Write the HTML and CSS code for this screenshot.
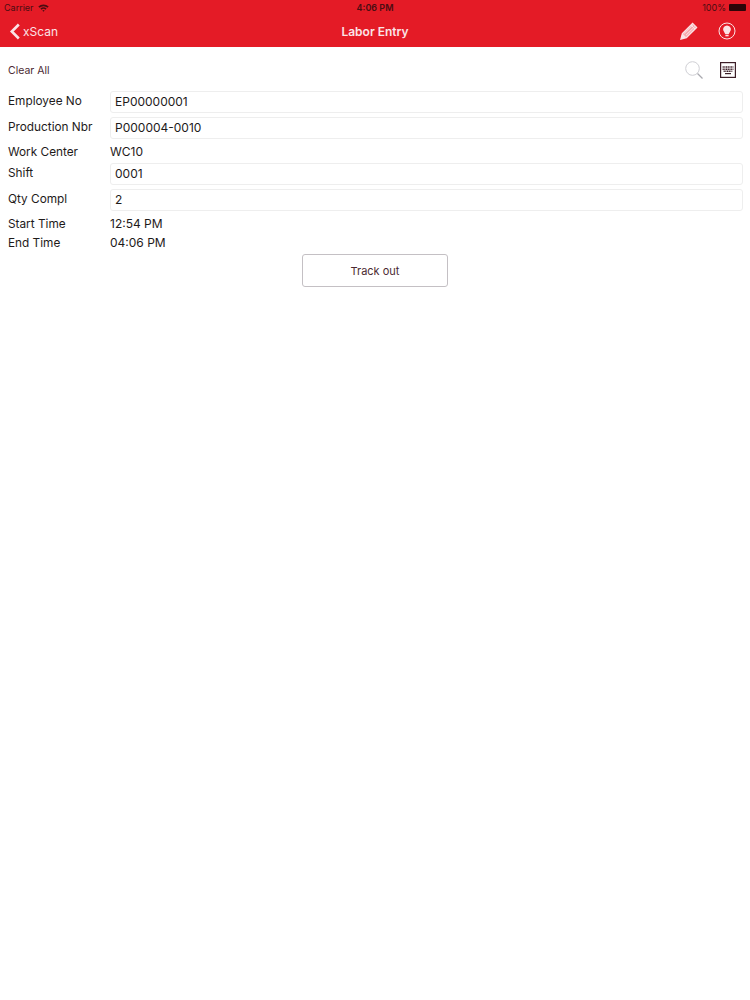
FILE: index.html
```html
<!DOCTYPE html>
<html lang="en">
<head>
  <meta charset="UTF-8">
  <meta name="viewport" content="width=device-width, initial-scale=1.0">
  <title>Labor Entry</title>
  <link rel="stylesheet" href="styles.css">
</head>
<body>

  <header class="app-header">
    <div class="status-bar">
      <div class="status-left">
        <span>Carrier</span>
        <svg class="wifi" width="11" height="8" viewBox="0 0 11 8">
          <path d="M0.3 2.6 A7.5 7.5 0 0 1 10.7 2.6 L9.5 3.8 A5.8 5.8 0 0 0 1.5 3.8 Z" fill="#4a0d12"/>
          <path d="M2.4 4.6 A4.6 4.6 0 0 1 8.6 4.6 L7.5 5.7 A3 3 0 0 0 3.5 5.7 Z" fill="#4a0d12"/>
          <path d="M4.3 6.5 A1.8 1.8 0 0 1 6.7 6.5 L5.5 7.8 Z" fill="#4a0d12"/>
        </svg>
      </div>
      <div class="status-time">4:06 PM</div>
      <div class="status-right">
        <span>100%</span>
        <span class="battery"><span class="battery-fill"></span></span>
      </div>
    </div>
    <div class="nav-bar">
      <div class="nav-back">
        <svg width="12" height="17" viewBox="0 0 12 17">
          <path d="M9.8 1.5 L2.8 8.5 L9.8 15.5" fill="none" stroke="#fbe4e6" stroke-width="2.6"/>
        </svg>
        <span>xScan</span>
      </div>
      <div class="nav-title">Labor Entry</div>
      <div class="nav-actions">
        <svg width="18" height="18" viewBox="0 0 18 18">
          <path d="M1 17 L2.4 11.6 L12.6 1.4 L16.6 5.4 L6.4 15.6 Z" fill="#f6a9ad" stroke="#fbe4e6" stroke-width="1.3"/>
          <path d="M1 17 L2.4 11.6 L6.4 15.6 Z" fill="#fbe4e6"/>
          <path d="M4.2 11.4 L13 2.8 M6 13.2 L14.8 4.6 M11 3 L15 7" fill="none" stroke="#fbe4e6" stroke-width="1"/>
        </svg>
        <svg width="18" height="18" viewBox="0 0 18 18">
          <circle cx="9" cy="9" r="8" fill="none" stroke="#fbe4e6" stroke-width="1"/>
          <path d="M9 3.4 A4 4 0 0 1 11.6 10.4 L10.8 12 L7.2 12 L6.4 10.4 A4 4 0 0 1 9 3.4 Z" fill="#fbe4e6"/>
          <rect x="7.4" y="12.7" width="3.2" height="1.6" fill="#fbe4e6"/>
        </svg>
      </div>
    </div>
  </header>

  <main class="content">
    <div class="toolbar">
      <span class="clear-all">Clear All</span>
      <div class="toolbar-icons">
        <svg width="18" height="18" viewBox="0 0 18 18">
          <circle cx="7.5" cy="7.5" r="6.8" fill="none" stroke="#cfcfd4" stroke-width="1"/>
          <path d="M12.5 12.5 L17.5 17.5" stroke="#a9a9ae" stroke-width="1.2"/>
        </svg>
        <svg width="16" height="16" viewBox="0 0 16 16">
          <rect x="0.6" y="0.6" width="14.8" height="14.8" fill="none" stroke="#3d1f28" stroke-width="1.2"/>
          <path d="M2.6 5 H13.4 M2.6 7.2 H13.4 M3.6 9.2 H12.4" stroke="#3d1f28" stroke-width="1.4" stroke-dasharray="1.2 0.5"/>
          <path d="M5 11.6 H11" stroke="#3d1f28" stroke-width="1.2"/>
        </svg>
      </div>
    </div>

    <form class="entry-form">
      <div class="row row-input">
        <label>Employee No</label>
        <div class="field">EP00000001</div>
      </div>
      <div class="row row-input">
        <label>Production Nbr</label>
        <div class="field">P000004-0010</div>
      </div>
      <div class="row row-text row-center">
        <label>Work Center</label>
        <span>WC10</span>
      </div>
      <div class="row row-input">
        <label>Shift</label>
        <div class="field">0001</div>
      </div>
      <div class="row row-input">
        <label>Qty Compl</label>
        <div class="field">2</div>
      </div>
      <div class="row row-text">
        <label>Start Time</label>
        <span>12:54 PM</span>
      </div>
      <div class="row row-text">
        <label>End Time</label>
        <span>04:06 PM</span>
      </div>
    </form>

    <div class="actions">
      <button type="button" class="track-btn">Track out</button>
    </div>
  </main>

</body>
</html>
```

FILE: styles.css
```css
body {
  font-family: 'Inter', 'Liberation Sans', sans-serif;
  background-color: #fff;
  color: #1e1a1a;
  margin: 0;
  padding: 0;
}

.app-header {
  height: 47px;
  background-color: #e41b26;
}

.status-bar {
  height: 15px;
  padding: 0 4px;
  display: grid;
  grid-template-columns: 1fr auto 1fr;
  align-items: center;
  font-size: 9px;
  color: #4a0d12;
}

.status-left {
  display: flex;
  align-items: center;
  gap: 4px;
}

.status-time {
  font-weight: 600;
}

.status-right {
  display: flex;
  align-items: center;
  justify-content: flex-end;
  gap: 3px;
}

.battery {
  width: 17px;
  height: 7px;
  display: block;
}

.battery-fill {
  display: block;
  width: 100%;
  height: 100%;
  background-color: #2c0508;
  border-radius: 1px;
}

.nav-bar {
  height: 32px;
  padding: 0 14px;
  display: grid;
  grid-template-columns: 1fr auto 1fr;
  align-items: center;
  color: #fbe4e6;
}

.nav-back {
  display: flex;
  align-items: center;
  gap: 2px;
  margin-left: -5px;
  font-size: 12px;
}

.nav-title {
  font-size: 12px;
  font-weight: 600;
}

.nav-actions {
  display: flex;
  align-items: center;
  justify-content: flex-end;
  gap: 20px;
}

.content {
  padding: 0 7px 0 8px;
}

.toolbar {
  height: 44px;
  box-sizing: border-box;
  padding-top: 2px;
  display: flex;
  align-items: center;
  justify-content: space-between;
}

.clear-all {
  font-size: 10.5px;
  color: #4b2a33;
}

.toolbar-icons {
  display: flex;
  align-items: center;
  gap: 17px;
  padding-right: 7px;
}

.row {
  display: flex;
  align-items: center;
  font-size: 12px;
}

.row label {
  width: 102px;
  flex-shrink: 0;
  font-size: 11.8px;
}

.row-input {
  height: 22px;
  margin-bottom: 4px;
}

.row-input label {
  padding-bottom: 2px;
}

.row-text {
  height: 19px;
  box-sizing: border-box;
  padding-bottom: 2px;
}

.row-center {
  margin-bottom: 1px;
}

.field {
  flex: 1;
  height: 22px;
  box-sizing: border-box;
  padding-left: 4px;
  line-height: 20px;
  border: 1px solid #eeeeee;
  border-radius: 3px;
}

.actions {
  display: flex;
  justify-content: center;
  margin-top: 1px;
  padding-right: 1px;
}

.track-btn {
  width: 146px;
  height: 33px;
  background-color: #fff;
  border: 1px solid #c4c0c4;
  border-radius: 3px;
  font-family: inherit;
  font-size: 11px;
  color: #4b2a33;
}
```
